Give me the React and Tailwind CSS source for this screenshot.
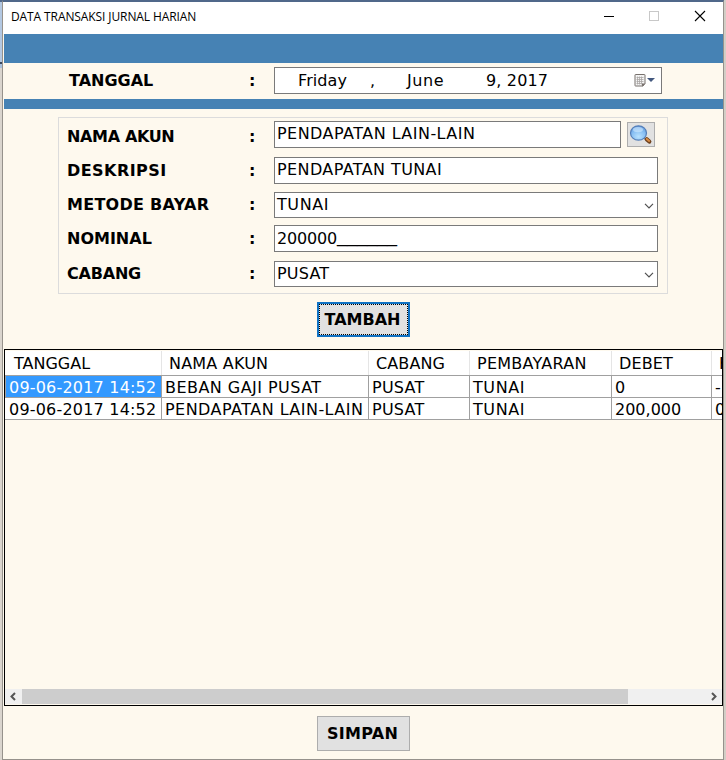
import React from "react";

const LABEL = "font-bold whitespace-pre leading-[20px]";

function Chevron() {
  return (
    <svg width="10" height="6" viewBox="0 0 10 6" className="mr-[3px] mt-px shrink-0" fill="none" stroke="#505050" strokeWidth="1.2">
      <path d="M1 .8 5 4.8 9 .8" />
    </svg>
  );
}

function Magnifier() {
  return (
    <svg width="26" height="23" viewBox="0 0 26 23">
      <defs>
        <radialGradient id="glass" cx="0.5" cy="0.75" r="0.75">
          <stop offset="0" stopColor="#b9e2ff" />
          <stop offset="0.6" stopColor="#86bdf2" />
          <stop offset="1" stopColor="#6299de" />
        </radialGradient>
      </defs>
      <path d="M15.500 14.500 18.500 16.800" stroke="#888" strokeWidth="1.8" />
      <path d="M18.800 16.300 21.300 18.500" stroke="#70431f" strokeWidth="4.200" strokeLinecap="round" />
      <path d="M18.800 15.900 21.200 17.900" stroke="#d98c45" strokeWidth="2" strokeLinecap="round" />
      <ellipse cx="10.500" cy="10" rx="8" ry="7.200" fill="url(#glass)" stroke="#557fb8" strokeWidth="1.200" />
      <ellipse cx="10" cy="6.600" rx="5" ry="2.600" fill="#d9efff" opacity=".55" />
    </svg>
  );
}

function Field({ label, labelClass, row, box, text, textClass, select, children }) {
  return (
    <div className={"flex items-start " + row}>
      <div className={"w-[182px] shrink-0 " + LABEL + " " + labelClass}>{label}</div>
      <div className={"w-[25px] shrink-0 " + LABEL + " " + labelClass}>:</div>
      <div className={"flex items-center justify-between border border-[#7a7a7a] bg-white pl-[2px] " + box}>
        <span className={"whitespace-pre leading-[20px] " + textClass}>{text}</span>
        {select && <Chevron />}
      </div>
      {children}
    </div>
  );
}

const GRID = "grid grid-cols-[157px_207px_101px_142px_100px_10px]";
const HEADERS = [
  ["TANGGAL", "pl-[9px]"],
  ["NAMA AKUN", "pl-[7px] tracking-[0.2px]"],
  ["CABANG", "pl-[7px] tracking-[0.1px]"],
  ["PEMBAYARAN", "pl-[7px] tracking-[0.25px]"],
  ["DEBET", "pl-[7px] tracking-[0.15px]"],
  ["K", "pl-[7px]"],
];
const ROWS = [
  ["09-06-2017 14:52", "BEBAN GAJI PUSAT", "PUSAT", "TUNAI", "0", "-"],
  ["09-06-2017 14:52", "PENDAPATAN LAIN-LAIN", "PUSAT", "TUNAI", "200,000", "0"],
];
const CELL = [
  "pl-[4px] tracking-[0.2px]",
  "pl-[3px] tracking-[0.46px]",
  "pl-[3px] tracking-[0.25px]",
  "pl-[3px] tracking-[0.6px]",
  "pl-[3px]",
  "pl-[3px]",
];

export default function App() {
  return (
    <div className="flex h-[760px] w-[726px] overflow-hidden bg-[#d3cec6] font-['DejaVu_Sans',Verdana,sans-serif] text-[16px] text-black">
      <div className="flex w-[2px] shrink-0 flex-col">
        <div className="h-[2px] bg-[#50688a]" />
        <div className="h-[60px] bg-[#b3c8e2]" />
        <div className="h-[2px] bg-[#39495f]" />
        <div className="h-[4px] bg-[#a8c0dc]" />
        <div className="flex-1 bg-[#dad5ce]" />
      </div>
      <div className="flex w-[722px] shrink-0 flex-col border-x border-b border-t-2 border-x-[#96928c] border-b-[#96928c] border-t-[#50688a] bg-[#fef9ee]">
        <div className="flex h-[32px] shrink-0 items-center justify-between bg-white pl-[8px] pr-[17px]">
          <span className="mt-[-2px] whitespace-pre font-['Open_Sans','Noto_Sans',sans-serif] text-[12px] tracking-[-0.1px]">DATA TRANSAKSI JURNAL HARIAN</span>
          <svg width="102" height="12" viewBox="0 0 102 12" fill="none" className="mt-[-4px]">
            <path d="M0 6.5H10" stroke="#000" />
            <rect x="45.500" y="1.500" width="9" height="9" stroke="#c8c8c8" />
            <path d="M91 1 101 11M101 1 91 11" stroke="#000" strokeWidth="1.1" />
          </svg>
        </div>
        <div className="ml-px h-[29px] shrink-0 bg-[#4682b4]" />
        <div className="flex h-[36px] shrink-0 items-start pl-[65px] pt-[4px]">
          <div className={"mt-[4px] w-[181px] pl-px " + LABEL}>TANGGAL</div>
          <div className={"mt-[4px] w-[25px] " + LABEL}>:</div>
          <div className="flex h-[27px] w-[388px] items-center border border-[#7a7a7a] bg-white pl-[23px] pr-[6px] leading-[20px]">
            <span className="w-[72px] tracking-[0.1px]">Friday</span>
            <span className="w-[37px]">,</span>
            <span className="w-[79px] tracking-[0.6px]">June</span>
            <span className="flex-1 tracking-[0.15px]">9, 2017</span>
            <svg width="21" height="13" viewBox="0 0 21 13">
              <path d="M1.500 .5h9q.5 0 .5.500v8.500l-2 2.500h-7.500q-.5 0-.5-.500V1q0-.5.500-.5Z" fill="#f4f4f4" stroke="#77706c" />
              <path d="M2.500 3.500h7M2.500 5.500h7M2.500 7.500h7M2.500 9.500h6M3.500 2.500v8M5.500 2.500v8M7.500 2.500v8" stroke="#aaa6a5" strokeWidth=".8" />
              <path d="M8 12.500V9.500h3.500Z" fill="#77706c" />
              <path d="M13 4h8l-4 4Z" fill="#43587f" />
            </svg>
          </div>
        </div>
        <div className="ml-px h-[10px] shrink-0 bg-[#4682b4]" />

        <div className="ml-[55px] mt-[8px] flex h-[177px] w-[610px] shrink-0 flex-col border border-[#dcdcdc] pl-[8px] pt-[3px]">
          <Field label="NAMA AKUN" labelClass="mt-[6px] tracking-[-0.35px]" row="h-[36px]" box="h-[27px] w-[347px]" text="PENDAPATAN LAIN-LAIN" textClass="mt-[-1px] tracking-[0.46px]">
            <button className="ml-[6px] mt-[1px] flex h-[25px] w-[28px] items-center justify-center border border-[#adadad] bg-[#e1e1e1]">
              <Magnifier />
            </button>
          </Field>
          <Field label="DESKRIPSI" labelClass="mt-[4px] tracking-[0.45px]" row="h-[35px]" box="h-[27px] w-[384px]" text="PENDAPATAN TUNAI" textClass="mt-[-1px] tracking-[0.4px]" />
          <Field label="METODE BAYAR" labelClass="mt-[3px] tracking-[0.28px]" row="h-[33px]" box="h-[26px] w-[384px]" text="TUNAI" textClass="tracking-[0.6px]" select />
          <Field
            label="NOMINAL"
            labelClass="mt-[4px]"
            row="h-[36px]"
            box="h-[27px] w-[384px]"
            text={<>200000<span className="align-[2px] font-['Liberation_Sans',Arial,sans-serif] text-[18px] leading-none tracking-normal">______</span></>}
            textClass="mt-[-1px] tracking-[-0.18px]"
          />
          <Field label="CABANG" labelClass="mt-[3px] tracking-[-0.2px]" row="h-[26px]" box="h-[26px] w-[384px]" text="PUSAT" textClass="tracking-[0.2px]" select />
        </div>

        <button className="ml-[314px] mt-[8px] h-[35px] w-[93px] shrink-0 border-2 border-[#0f72c4] bg-[#e1e1e1]">
          <span className="flex h-full w-full items-center justify-center border border-dotted border-black pr-[2px] font-bold">TAMBAH</span>
        </button>

        <div className="ml-px mt-[12px] flex h-[357px] w-[719px] shrink-0 flex-col overflow-hidden border border-black pt-px">
          <div className={GRID + " h-[25px] shrink-0 border-b border-[#a0a0a0] bg-white"}>
            {HEADERS.map(([name, cls]) => (
              <div key={name} className={"overflow-hidden whitespace-pre border-r border-[#e5e5e5] leading-[26px] last:border-r-0 " + cls}>
                {name}
              </div>
            ))}
          </div>
          {ROWS.map((cells, r) => (
            <div key={r} className={GRID + " h-[22px] shrink-0 border-b border-[#a0a0a0] bg-white"}>
              {cells.map((c, i) => (
                <div
                  key={i}
                  className={
                    "overflow-hidden whitespace-pre border-r border-[#a0a0a0] leading-[23px] last:border-r-0 " +
                    CELL[i] +
                    (r === 0 && i === 0 ? " bg-[#3399ff] text-white shadow-[inset_1px_0_0_#a0a0a0]" : "")
                  }
                >
                  {c}
                </div>
              ))}
            </div>
          ))}
          <div className="flex-1" />
          <div className="flex h-[15px] shrink-0 items-center bg-[#f0f0f0]">
            <svg width="17" height="15" viewBox="0 0 17 15" fill="none" stroke="#555" strokeWidth="2">
              <path d="M10 4 6.500 7.500 10 11" />
            </svg>
            <div className="h-full w-[606px] bg-[#cdcdcd]" />
            <div className="flex-1" />
            <svg width="17" height="15" viewBox="0 0 17 15" fill="none" stroke="#555" strokeWidth="2">
              <path d="M7 4 10.500 7.500 7 11" />
            </svg>
          </div>
          <div className="h-px shrink-0" />
        </div>

        <button className="ml-[314px] mt-[10px] h-[35px] w-[93px] shrink-0 border border-[#adadad] bg-[#e1e1e1] pr-[2px] font-bold tracking-[0.3px]">SIMPAN</button>
      </div>
    </div>
  );
}
